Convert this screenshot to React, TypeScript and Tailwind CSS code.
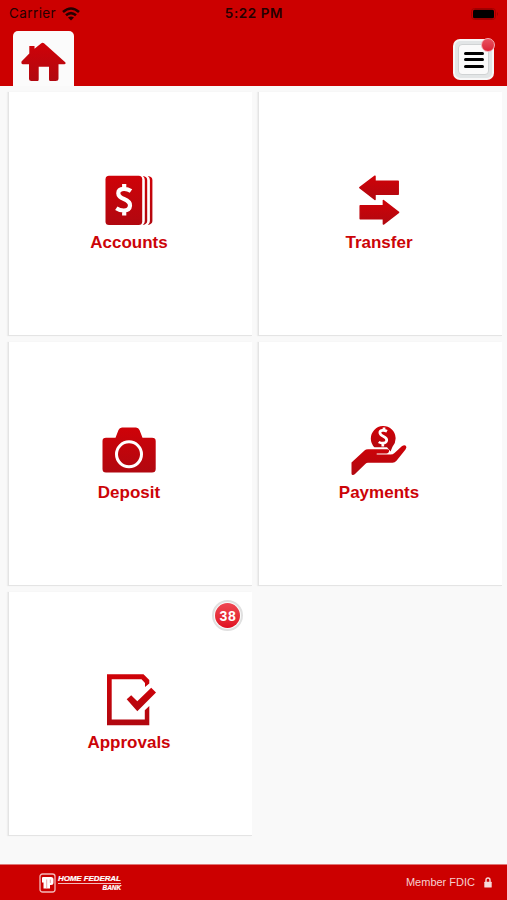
import type { ReactNode } from 'react';

const HomeIcon = () => (
  <svg className="w-[46px] h-[40px]" viewBox="0 0 46 40">
    <path
      d="M23 1.200Q21.500.3 20 1.500L13.500 6.800V4H8.300v7.600L.5 19.500Q0 22.300 1.800 22.300H8V36.500Q8 39 10.500 39H16.500Q17.700 39 17.700 37.500V24.700H28V37.500Q28 39 29.500 39H34.500Q37.500 39 37.500 36.500V22.300H43.500Q45 22.300 44.500 20.500Z"
      fill="url(#red)"
    />
  </svg>
);

const AccountsIcon = () => (
  <svg className="w-[60px] h-[56px]" viewBox="0 0 60 56">
    <rect x="5.500" y="3.700" width="36.700" height="49.300" rx="3.500" fill="url(#red)" />
    <path d="M42.800 3.900Q47.200 4.500 47.200 8V49Q47.200 52.300 42.800 52.900Q44.800 51.500 44.800 49V8Q44.800 5.300 42.800 3.900Z" fill="url(#red)" />
    <path d="M47.800 3.900Q52.400 4.500 52.400 8V49Q52.400 52.300 47.800 52.900Q49.900 51.500 49.900 49V8Q49.900 5.300 47.800 3.900Z" fill="url(#red)" />
    <path
      d="M31 19Q27.500 16.600 23.800 16.800Q18.300 17.100 18.300 21.200Q18.300 24.700 24 27Q30.300 29.600 30 33.600Q29.600 38.300 24 38.500Q19.800 38.600 16.300 36.300M24.200 12V17M24.200 38V43.500"
      fill="none"
      stroke="#fff"
      strokeWidth="4.200"
    />
  </svg>
);

const TransferIcon = () => (
  <svg className="w-[60px] h-[56px]" viewBox="0 0 60 56">
    <g fill="url(#red)" stroke="url(#red)" strokeWidth="1.500" strokeLinejoin="round">
      <path d="M9.800 15.700 25 4.200V9.300H48.200V22.300H25V27.500Z" />
      <path d="M48.600 40.300 33.400 28.500V33.800H10.200V46.800H33.400V52.100Z" />
    </g>
  </svg>
);

const DepositIcon = () => (
  <svg className="w-[60px] h-[56px]" viewBox="0 0 60 56">
    <path
      d="M6 15.700H15.500L18.500 8Q19.500 5.500 22 5.500H36Q38.500 5.500 39.500 8L42.500 15.700H52Q55.700 15.700 55.700 19V47Q55.700 50.500 52 50.500H6Q2.500 50.500 2.500 47V19Q2.500 15.700 6 15.700Z"
      fill="url(#red)"
    />
    <circle cx="29" cy="32.300" r="12.500" fill="none" stroke="#fff" strokeWidth="3" />
  </svg>
);

const PaymentsIcon = () => (
  <svg className="w-[60px] h-[56px]" viewBox="0 0 60 56">
    <path
      d="M24.500 25.300A12.400 12.400 0 1 1 42.500 24.700L40.500 29.500 37 25.300Z"
      fill="url(#red)"
    />
    <path
      d="M37 9.300Q34.500 8 32.300 8.400Q29.500 9 29.900 11.100Q30.300 13 33.600 14.500Q37.200 16.300 36.700 18.700Q36 21.200 33 21.200Q30.500 21.200 28.700 20M34 5.500V8.500M32.800 21V24.500"
      fill="none"
      stroke="#fff"
      strokeWidth="2.700"
    />
    <path
      d="M1.500 51.500V40.500L14.500 28.500Q15.800 27.300 18 27.300H37.200Q39.500 27.300 39 29.600Q38.500 31.600 36.500 31.600H26.700V32.600H40.500Q42.800 32.600 44.500 31L51.800 24.300Q54.500 22.300 56 23.900Q57 25.300 55.500 27.500L46.500 38.800Q44.800 40.800 42.500 40.800H18Q16.500 40.800 15.300 42L5 52Q3.800 53.300 2.500 53Q1.500 52.700 1.500 51.500Z"
      fill="url(#red)"
    />
  </svg>
);

const ApprovalsIcon = () => (
  <svg className="w-[60px] h-[56px]" viewBox="0 0 60 56">
    <path
      d="M7 2.200H43.500L49.300 8V11.500L45 15V11L41.500 7.300H11.700V47.500H44.800V38.200L49.300 34V53.200H7Z"
      fill="url(#red)"
    />
    <path d="M26.700 27.200 31.200 23.300 37.300 29.200 51.200 15.800 56 20.600 37.300 39.300Z" fill="url(#red)" />
  </svg>
);

const LockIcon = () => (
  <svg className="w-2 h-[11px]" viewBox="0 0 8 11">
    <path d="M2 5V3Q2 1 4 1T6 3V5" fill="none" stroke="#f6dada" strokeWidth="1.400" />
    <rect x=".3" y="4.700" width="7.400" height="5.800" rx=".6" fill="#f6dada" />
  </svg>
);

const StatusBar = () => (
  <div className="grid grid-cols-3 items-center h-7 pl-[9px] pr-[8px] font-['Inter','Liberation_Sans',sans-serif] text-[#250000]">
    <div className="flex items-center gap-[6px]">
      <span className="text-[13.500px] leading-none tracking-[0.400px]">Carrier</span>
      <svg className="w-[18px] h-[14px]" viewBox="0 0 18 14">
        <g fill="none" stroke="#250000" strokeWidth="2.600">
          <path d="M1 5Q9-2 17 5" />
          <path d="M4 8.300Q9 4 14 8.300" />
        </g>
        <path d="M6 10.500Q9 8.300 12 10.500L9 13.500Z" fill="#250000" />
      </svg>
    </div>
    <span className="text-center text-[13.500px] leading-none font-semibold tracking-[0.600px] whitespace-nowrap">5:22 PM</span>
    <svg className="w-7 h-3 justify-self-end" viewBox="0 0 28 12">
      <rect x=".5" y=".5" width="24" height="11" rx="3" fill="none" stroke="#a00000" />
      <rect x="2" y="1.700" width="21" height="8.600" rx="1.500" fill="#000" />
      <path d="M26 4Q28 6 26 8Z" fill="#a00000" />
    </svg>
  </div>
);

const Header = () => (
  <header className="h-[86px] bg-[#cc0000]">
    <StatusBar />
    <div className="flex justify-between px-[13px] pt-[3px]">
      <div className="w-[61px] h-[55px] rounded-t-[5px] bg-[#fbfbfb] flex justify-center pt-[11px]">
        <HomeIcon />
      </div>
      <div className="relative mt-2 w-[41px] h-[41px] rounded-[7px] bg-[#e2e5e6] border-2 border-[#f7f7f7] p-[3px]">
        <div className="h-full rounded-[4px] bg-[#fafafa] border border-[#d0d3d4] flex flex-col items-center justify-center gap-[3.500px]">
          <div className="w-5 h-[3px] rounded-full bg-black" />
          <div className="w-5 h-[3px] rounded-full bg-black" />
          <div className="w-5 h-[3px] rounded-full bg-black" />
        </div>
        <div className="absolute -top-[3px] -right-[3px] w-[14px] h-[14px] rounded-full border border-[#f3aeb4] bg-linear-to-b from-[#e9505f] to-[#dc2136]" />
      </div>
    </div>
  </header>
);

type TileProps = {
  label: string;
  icon: ReactNode;
  badge?: number;
};

const Tile = ({ label, icon, badge }: TileProps) => (
  <div className="relative h-[244px] bg-white border-l border-b border-[#e4e4e4] shadow-[-1px_0_1px_#eeeeee] flex flex-col items-center pt-20 pr-[2px]">
    {icon}
    <p className="mt-[3px] pr-[1px] text-[17px] leading-6 font-bold text-[#cc0408]">{label}</p>
    {badge && (
      <div className="absolute top-2 right-[9px] w-[31px] h-[31px] rounded-full bg-[#fafafa] border-2 border-[#e0e0e0] p-[1px]">
        <div className="w-full h-full rounded-full bg-linear-to-b from-[#ee4652] to-[#e00b20] flex items-center justify-center text-white text-[14px] leading-none font-bold tracking-[0.800px] pl-[1px]">
          {badge}
        </div>
      </div>
    )}
  </div>
);

const Footer = () => (
  <footer className="h-9 bg-[#cc0000] border-t border-[#df7777] flex items-center justify-between pl-[39px] pr-[15px]">
    <div className="flex items-center gap-[2px]">
      <svg className="w-[17px] h-5" viewBox="0 0 17 20">
        <rect x="1" y="1" width="15" height="18" rx="2.500" fill="none" stroke="#f3baba" strokeWidth="1.300" />
        <path
          d="M3 5Q3 4 4 4H12Q14.500 4 14.500 6.500V9.500Q14.500 12 12 12H11V15.500H4.500V9.500H3Z"
          fill="#fff"
        />
        <path d="M7.700 6.500V15.500M11.300 6.500V10" fill="none" stroke="#e38080" strokeWidth=".7" />
      </svg>
      <div className="w-[63px] flex flex-col items-end text-white italic font-bold leading-none whitespace-nowrap">
        <span className="w-full border-b border-[#f3baba] text-[8px] leading-[8px] tracking-[-0.100px] [-webkit-text-stroke:0.200px_white]">
          HOME FEDERAL
        </span>
        <span className="text-[6.500px] leading-[7px] tracking-[-0.100px] [-webkit-text-stroke:0.200px_white]">BANK</span>
      </div>
    </div>
    <div className="flex items-center gap-2">
      <span className="text-[11px] leading-none text-[#f6d0d0] pr-[1px]">Member FDIC</span>
      <LockIcon />
    </div>
  </footer>
);

const App = () => (
  <div className="w-[507px] h-[900px] flex flex-col overflow-hidden bg-[#f9f9f9] font-['Liberation_Sans',Arial,sans-serif]">
    <svg className="absolute w-0 h-0">
      <defs>
        <linearGradient id="red" x1="0" y1="0" x2="0" y2="1">
          <stop offset="0" stopColor="#cf0208" />
          <stop offset="1" stopColor="#b10810" />
        </linearGradient>
      </defs>
    </svg>
    <Header />
    <main className="grow grid grid-cols-[244px_244px] content-start gap-x-[6px] gap-y-[6px] pl-[8px] pt-[6px]">
      <Tile label="Accounts" icon={<AccountsIcon />} />
      <Tile label="Transfer" icon={<TransferIcon />} />
      <Tile label="Deposit" icon={<DepositIcon />} />
      <Tile label="Payments" icon={<PaymentsIcon />} />
      <Tile label="Approvals" icon={<ApprovalsIcon />} badge={38} />
    </main>
    <Footer />
  </div>
);

export default App;
